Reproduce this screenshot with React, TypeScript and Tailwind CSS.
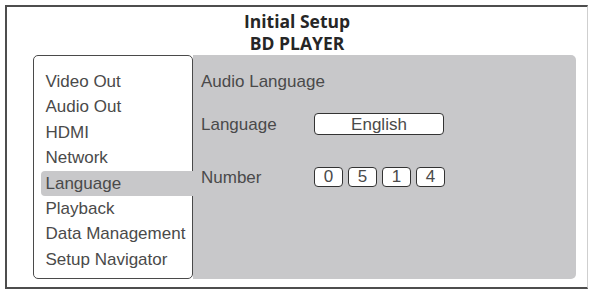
const menuItems = [
  'Video Out',
  'Audio Out',
  'HDMI',
  'Network',
  'Language',
  'Playback',
  'Data Management',
  'Setup Navigator',
];

const selected = 'Language';
const digits = ['0', '5', '1', '4'];

export default function App() {
  return (
    <div className="w-[590px] h-[292px] bg-white pt-[5px] pl-[5px]">
      {/* Outer frame */}
      <div className="w-[583px] h-[284px] border-l-2 border-t-2 border-b-2 border-r border-l-[#4d4d4d] border-t-[#4d4d4d] border-b-[#4d4d4d] border-r-[#cfcfcf]">
        {/* Title */}
        <div
          className="pt-[2.7px] text-center text-[17.5px] leading-[22px] font-bold text-[#262626]"
          style={{ fontFamily: '"Open Sans", "Noto Sans", sans-serif' }}
        >
          <div>Initial Setup</div>
          <div>BD PLAYER</div>
        </div>

        <div
          className="mt-[1.3px] ml-[26px] flex h-[224px] text-[17px] text-[#4a4a4a]"
          style={{ fontFamily: '"Liberation Sans", Arial, sans-serif' }}
        >
          {/* Menu list */}
          <div className="w-[160px] shrink-0 rounded-[5px] border-[1.5px] border-[#4a4a4a] bg-white pt-[13px] pl-[6.5px]">
            {menuItems.map((item) => (
              <div
                key={item}
                className={`h-[25.4px] leading-[25.4px] pl-[5px] whitespace-nowrap ${
                  item === selected ? 'bg-[#c8c8ca] rounded-l-[4px] -mr-[1.5px]' : ''
                }`}
              >
                {item}
              </div>
            ))}
          </div>

          {/* Detail panel */}
          <div className="w-[383px] shrink-0 rounded-r-[5px] bg-[#c8c8ca] pt-[13.6px] pl-[8px]">
            <div className="leading-[25px]">Audio Language</div>

            <div className="mt-[18.2px] flex h-[25px] items-center">
              <div className="w-[113px] leading-[25px]">Language</div>
              <div className="flex h-[22px] w-[130px] items-center justify-center rounded-[4px] border-[1.5px] border-[#333] bg-white leading-none">
                English
              </div>
            </div>

            <div className="mt-[28.7px] flex h-[25px] items-center">
              <div className="w-[113px] leading-[25px]">Number</div>
              <div className="flex gap-[5px] -mt-[2px]">
                {digits.map((d, i) => (
                  <div
                    key={i}
                    className="flex h-[20px] w-[29px] items-center justify-center rounded-[4px] border-[1.5px] border-[#333] bg-white leading-none"
                  >
                    {d}
                  </div>
                ))}
              </div>
            </div>
          </div>
        </div>
      </div>
    </div>
  );
}
